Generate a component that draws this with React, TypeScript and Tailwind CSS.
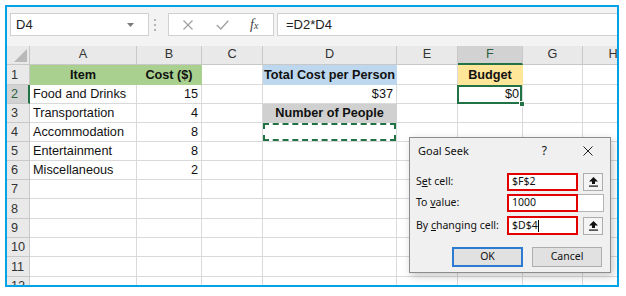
import React from "react";

type Cell = { t?: string; fill?: string; bold?: boolean; align?: "l" | "c" | "r"; kind?: "active" | "dashed" };

const data: Record<string, Cell> = {
  "1A": { t: "Item", fill: "green", bold: true, align: "c" },
  "1B": { t: "Cost ($)", fill: "green", bold: true, align: "c" },
  "1D": { t: "Total Cost per Person", fill: "blue", bold: true, align: "c" },
  "1F": { t: "Budget", fill: "yellow", bold: true, align: "c" },
  "2A": { t: "Food and Drinks" },
  "2B": { t: "15", align: "r" },
  "2D": { t: "$37", align: "r" },
  "2F": { t: "$0", align: "r", kind: "active" },
  "3A": { t: "Transportation" },
  "3B": { t: "4", align: "r" },
  "3D": { t: "Number of People", fill: "gray", bold: true, align: "c" },
  "4A": { t: "Accommodation" },
  "4B": { t: "8", align: "r" },
  "4D": { kind: "dashed" },
  "5A": { t: "Entertainment" },
  "5B": { t: "8", align: "r" },
  "6A": { t: "Miscellaneous" },
  "6B": { t: "2", align: "r" },
};

const fillCls: Record<string, string> = {
  green: "bg-[#a9d08e] border-[#a9d08e]",
  blue: "bg-[#bdd7ee] border-[#bdd7ee]",
  yellow: "bg-[#ffe699] border-[#ffe699]",
  gray: "bg-[#d0d0d0] border-[#d0d0d0]",
};

const letters = ["A", "B", "C", "D", "E", "F", "G", "H"];
const rows = [1, 2, 3, 4, 5, 6, 7, 8, 9, 10, 11, 12];

function RefButton() {
  return (
    <div className="w-[20px] h-[18px] bg-[#f4f4f4] border border-[#adadad] flex items-center justify-center">
      <svg width="9" height="10" viewBox="0 0 9 10">
        <path d="M4.5 0 L9 4.5 H6 V7 H3 V4.5 H0 Z" fill="#111" />
        <rect x="0" y="8.5" width="9" height="1.2" fill="#111" />
      </svg>
    </div>
  );
}

export default function App() {
  return (
    <div className="relative w-[626px] h-[296px] bg-white overflow-hidden pl-[5px] pt-[5px] font-['Liberation_Sans',Arial,sans-serif]">
      <div className="w-[614px] h-[282px] border-2 border-[#00a2e8] flex flex-col overflow-hidden bg-white">
        {/* Formula bar */}
        <div className="h-[39px] shrink-0 bg-[#f3f3f3] flex items-start pt-[6px] pl-[3px]">
          <div className="w-[139px] h-[23px] bg-white border border-[#d0d0d0] flex items-center pl-[5px] pr-[14px] text-[13px] text-[#222]">
            <span className="flex-1">D4</span>
            <svg width="7" height="4" viewBox="0 0 7 4">
              <path d="M0 0 H7 L3.5 4 Z" fill="#7a7a7a" />
            </svg>
          </div>
          <div className="ml-[5px] mt-[6px] flex flex-col gap-[3px]">
            <div className="w-[2px] h-[2px] bg-[#b4b4b4]" />
            <div className="w-[2px] h-[2px] bg-[#b4b4b4]" />
            <div className="w-[2px] h-[2px] bg-[#b4b4b4]" />
          </div>
          <div className="ml-[12px] w-[106px] h-[23px] bg-white border border-[#d0d0d0] flex items-center pl-[14px]">
            <svg width="10" height="10" viewBox="0 0 10 10">
              <path d="M0.5 0.5 L9.5 9.5 M9.5 0.5 L0.5 9.5" stroke="#a0a0a0" strokeWidth="1.2" />
            </svg>
            <svg className="ml-[23px]" width="13" height="10" viewBox="0 0 13 10">
              <path d="M0.8 5 L4.8 9 L12.3 0.8" stroke="#a0a0a0" strokeWidth="1.3" fill="none" />
            </svg>
            <span className="ml-[21px] font-['Liberation_Serif',serif] italic text-[14px] text-[#444] leading-none">
              f<span className="text-[10px]">x</span>
            </span>
          </div>
          <div className="ml-[3px] flex-1 h-[23px] bg-white border border-[#d0d0d0] border-r-0 flex items-center pl-[8px] text-[13px] text-[#222]">
            =D2*D4
          </div>
        </div>

        {/* Grid */}
        <div className="flex-1 overflow-hidden bg-white">
          <div className="grid w-max grid-cols-[23px_107px_65px_61px_134px_61px_65px_60px_61px] grid-rows-[19px_20px_19px_19px_19px_19px_19px_19px_20px_19px_19px_20px_19px] text-[12.7px] leading-[15px] text-[#111]">
            <div className="bg-[#e9e9e9] border-r border-b border-[#c8c8c8] flex items-end justify-end pr-[2px] pb-[2px]">
              <svg width="13" height="13" viewBox="0 0 13 13">
                <path d="M13 0 V13 H0 Z" fill="#b9b9b9" />
              </svg>
            </div>
            {letters.map((l) =>
              l === "F" ? (
                <div key={l} className="bg-[#d2d2d2] border-r border-[#c8c8c8] border-b-2 border-b-[#217346] flex items-end pb-[1px] justify-center text-[#2c5f3f]">
                  {l}
                </div>
              ) : (
                <div key={l} className="bg-[#e9e9e9] border-r border-b border-[#c8c8c8] flex items-end pb-[2px] justify-center text-[#333]">
                  {l}
                </div>
              )
            )}
            {rows.map((r) => (
              <React.Fragment key={r}>
                {r === 2 ? (
                  <div className="bg-[#d2d2d2] border-b border-[#c8c8c8] border-r-2 border-r-[#217346] flex items-end pb-[1px] pl-[4px] text-[#2c5f3f]">
                    {r}
                  </div>
                ) : (
                  <div className="bg-[#e9e9e9] border-r border-b border-[#c8c8c8] flex items-end pb-[1px] pl-[4px] text-[#333]">
                    {r}
                  </div>
                )}
                {letters.map((l) => {
                  const c = data[`${r}${l}`] || {};
                  const colors = c.fill ? fillCls[c.fill] : "border-[#d9d9d9]";
                  const align =
                    c.align === "c" ? "justify-center" : c.align === "r" ? "justify-end pr-[3px]" : "pl-[3px]";
                  return (
                    <div
                      key={l}
                      className={`relative flex items-end pb-[1px] whitespace-nowrap border-r border-b ${colors} ${align} ${
                        c.bold ? "font-bold" : ""
                      } ${c.kind === "active" ? "z-10" : ""}`}
                    >
                      {c.t}
                      {c.kind === "active" && (
                        <>
                          <div className="absolute -left-[1px] top-0 right-0 -bottom-[1px] border-2 border-[#217346]" />
                          <div className="absolute -right-[3px] -bottom-[4px] w-[6px] h-[6px] bg-[#217346] border border-white" />
                        </>
                      )}
                      {c.kind === "dashed" && (
                        <div className="absolute inset-0 border-2 border-dashed border-[#217346]" />
                      )}
                    </div>
                  );
                })}
              </React.Fragment>
            ))}
          </div>
        </div>
      </div>

      {/* Goal Seek dialog */}
      <div className="absolute left-[409px] top-[137px] w-[202px] h-[136px] bg-[#f0f0f0] border border-[#8c8c8c] shadow-[2px_3px_8px_rgba(0,0,0,0.22)] font-['Noto_Sans','Segoe_UI',sans-serif] text-[10.5px] text-[#111] flex flex-col">
        <div className="h-[26px] flex items-center pl-[8px] pr-[17px]">
          <span className="text-[11px] flex-1">Goal Seek</span>
          <span className="text-[12px] mr-[36px]">?</span>
          <svg width="10" height="10" viewBox="0 0 10 10">
            <path d="M0.5 0.5 L9.5 9.5 M9.5 0.5 L0.5 9.5" stroke="#222" strokeWidth="1" />
          </svg>
        </div>
        <div className="mt-[9px] flex items-center pl-[6px] h-[18px]">
          <span className="w-[91px]">
            S<span className="underline">e</span>t cell:
          </span>
          <div className="w-[71px] h-[18px] bg-white border-2 border-[#e30000] flex items-center pl-[3px]">$F$2</div>
          <div className="ml-[5px]">
            <RefButton />
          </div>
        </div>
        <div className="mt-[3px] flex items-center pl-[6px] h-[18px]">
          <span className="w-[91px]">
            To <span className="underline">v</span>alue:
          </span>
          <div className="w-[71px] h-[18px] bg-white border-2 border-[#e30000] flex items-center pl-[3px]">1000</div>
          <div className="w-[26px] h-[18px] bg-white border-y border-r border-[#b5b5b5]" />
        </div>
        <div className="mt-[4px] flex items-center pl-[6px] h-[19px]">
          <span className="w-[91px]">
            By <span className="underline">c</span>hanging cell:
          </span>
          <div className="w-[71px] h-[19px] bg-white border-2 border-[#e30000] flex items-center pl-[3px]">
            $D$4<span className="w-[1px] h-[12px] bg-black" />
          </div>
          <div className="ml-[5px]">
            <RefButton />
          </div>
        </div>
        <div className="mt-[12px] flex justify-end pr-[8px] gap-[9px]">
          <div className="w-[71px] h-[20px] bg-[#e1e1e1] border-2 border-[#2b7bd3] flex items-center justify-center">OK</div>
          <div className="w-[70px] h-[20px] bg-[#e1e1e1] border border-[#adadad] flex items-center justify-center">Cancel</div>
        </div>
      </div>
    </div>
  );
}
